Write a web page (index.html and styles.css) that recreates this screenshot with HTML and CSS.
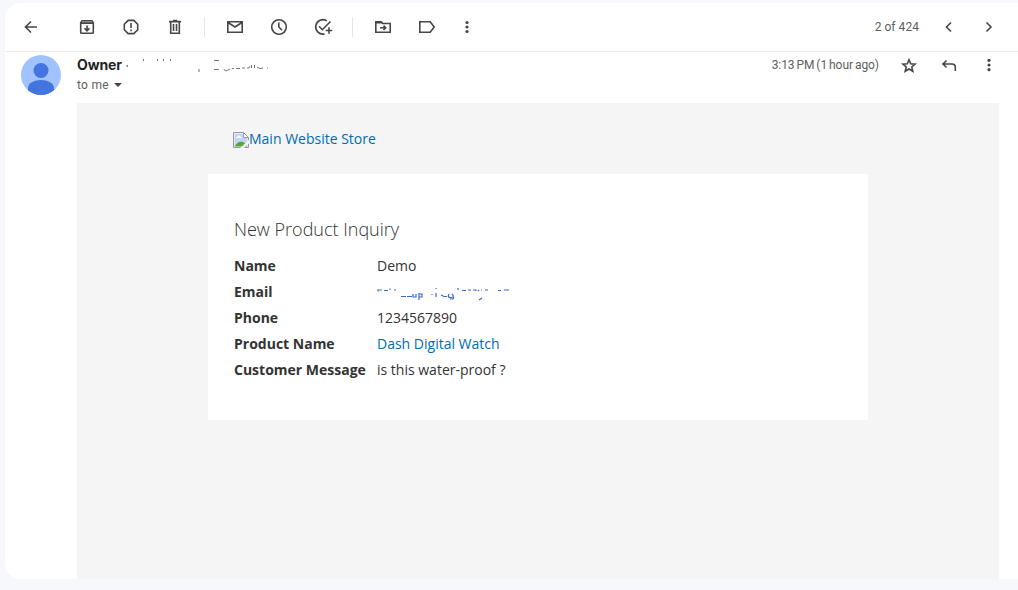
FILE: index.html
```html
<!DOCTYPE html>
<html lang="en">
<head>
<meta charset="utf-8">
<title>New Product Inquiry</title>
<link rel="stylesheet" href="styles.css">
</head>
<body>
<main class="panel">
  <header class="toolbar">
    <svg class="icon back" viewBox="0 0 20 20"><path d="M16 10H5M10 4.500L4.500 10l5.500 5.500"/></svg>
    <svg class="icon" viewBox="0 0 20 20"><path d="M3.700 6v9.600q0 .7.7.7h11.200q.7 0 .7-.7V6M10 8.500v5M7.500 11.200l2.500 2.600 2.500-2.600"/><path class="solid" d="M3 5.500L4.600 3h10.800L17 5.500V7H3z"/><path class="light" d="M5 4.800h10"/></svg>
    <svg class="icon" viewBox="0 0 20 20"><path d="M7.200 3.400h5.600l3.900 3.900v5.400l-3.900 3.900H7.200l-3.900-3.900V7.300zM10 6v5M10 12.500v1.700"/></svg>
    <svg class="icon" viewBox="0 0 20 20"><path d="M5.700 5v11.200h8.600V5M4 4.600h12M8 3.600h4M8.500 7v7M11.500 7v7"/></svg>
    <span class="divider"></span>
    <svg class="icon" viewBox="0 0 20 20"><path d="M2.800 4.700h14.400v10.600H2.800zM3 5.500l7 4.500 7-4.500"/></svg>
    <svg class="icon" viewBox="0 0 20 20"><circle cx="10" cy="10" r="7.300"/><path d="M9.800 5.500V10l3.300 3.300"/></svg>
    <svg class="icon" viewBox="0 0 20 20"><path d="M13.800 3.800A7.200 7.200 0 1 0 11.500 16.900M6 9.300l3.300 3.400L17.500 4.500M16 10.200v6.600M12.700 13.500h6.600"/></svg>
    <span class="divider"></span>
    <svg class="icon" viewBox="0 0 20 20"><path d="M2.800 5h5.500l1.500 1.500h7.400v8.800H2.800zM7 10.800h5.500M10.500 8.600l2.200 2.200-2.200 2.200"/><path class="solid" d="M2 4.800q0-.8.8-.8h5.500l2 2.500H2z"/></svg>
    <svg class="icon" viewBox="0 0 20 20"><path d="M2.800 4.800h10.400l4 5.200-4 5.200H2.800z"/></svg>
    <svg class="icon more" viewBox="0 0 20 20"><g class="solid"><circle cx="10" cy="5.500" r="1.600"/><circle cx="10" cy="10" r="1.600"/><circle cx="10" cy="14.500" r="1.600"/></g></svg>
    <span class="count">2 of 424</span>
    <svg class="icon nav" viewBox="0 0 20 20"><path d="M12 5.500L7.500 10l4.500 4.500"/></svg>
    <svg class="icon nav" viewBox="0 0 20 20"><path d="M7.500 5.500L12 10l-4.500 4.500"/></svg>
  </header>
  <section class="sender">
    <svg class="avatar" viewBox="0 0 40 40"><circle cx="20" cy="20" r="20" fill="#a0c3ff"/><circle cx="20" cy="15.500" r="7.500" fill="#4374e0"/><path fill="#4374e0" d="M7 35.200V33c0-5 6.500-8 13-8s13 3 13 8v2.200A20 20 0 0 1 7 35.200z"/></svg>
    <div class="who">
      <div class="from"><strong>Owner</strong>
        <svg class="smudge" viewBox="0 0 150 20"><path d="M6 10l-1.500 1 1.500 1M21.500 4v2M35.500 4v2M41.500 4v2M48.500 4v2M77 14v3M92 5.500h5M92 14.500h5M102 14.500l2 1.500 4-2M110 13.500h2M114 13.500h4M120 13h3M125 13h2l1-2M129.500 10v3M132.500 10v3M135 12l3 1.500 3-.5M145 13h1"/></svg>
      </div>
      <div class="to">to me <span class="caret"></span></div>
    </div>
    <div class="meta">
      <span class="time">3:13 PM (1 hour ago)</span>
      <svg class="icon" viewBox="0 0 20 20"><path d="M10 4.700l1.700 4 4.400.4-3.300 2.900 1 4.300-3.800-2.300-3.800 2.300 1-4.300-3.300-2.900 4.400-.4z"/></svg>
      <svg class="icon" viewBox="0 0 20 20"><path d="M7.500 5.500L4 9l3.500 3.500M4 9h9q3.300 0 3.300 3.300V16"/></svg>
      <svg class="icon" viewBox="0 0 20 20"><g class="solid"><circle cx="10" cy="5.300" r="1.600"/><circle cx="10" cy="10" r="1.600"/><circle cx="10" cy="14.700" r="1.600"/></g></svg>
    </div>
  </section>
  <article class="mail">
    <a class="store"><svg class="broken" viewBox="0 0 16 16"><path fill="#fff" d="M.5.500h10l5 5v10H.5z"/><path fill="#c3d4f5" d="M1.500 1.500h9v4h4v9h-13z"/><path fill="#fff" d="M3 6q0-1.500 1.500-1.500Q6 2.500 7.300 4.500 9 4.800 8.500 6z"/><path fill="#56ab37" d="M1.500 14.500q3-5 6.500-4.800 4-.2 6.500 4.800z"/><path stroke="#999" fill="none" d="M.5 15.500V.5h10l5 5v10H.5"/><path fill="#fff" stroke="#999" d="M10.500.500v5h5z"/><path stroke="#f5f5f5" stroke-width="2.600" d="M8 17l9-8.500"/></svg>Main Website Store</a>
    <div class="card">
      <h1>New Product Inquiry</h1>
      <dl class="fields">
        <dt>Name</dt><dd>Demo</dd>
        <dt>Email</dt><dd><svg class="trace" viewBox="0 0 140 26"><path d="M1 12.500V11h4M7 11.500h4M13 11V9.500M17 11h2M24 17.500h5M30 17.500h5M36 15v3h3v-3M42 14v7M42 15h3v3h-3M55 15v1M59 9v1M59 14v4M64 16l3 1.500h3M72 15q-2 4 2 3.500t1-3.500M73 20h3l1-2M81 9v2M85 11.500h4M91 11h3M96 11h3v1M101 11l1 1M105 11h-1M102 21l3-2M108 11h3M121 11.500h3M127 11h5"/></svg></dd>
        <dt>Phone</dt><dd>1234567890</dd>
        <dt>Product Name</dt><dd><a>Dash Digital Watch</a></dd>
        <dt>Customer Message</dt><dd>is this water-proof ?</dd>
      </dl>
    </div>
  </article>
</main>
</body>
</html>
```

FILE: styles.css
```css
* { box-sizing: border-box; }
body { margin: 0; height: 590px; padding: 3px 0 0 5px; background: #f6f8fc; font-family: Roboto, sans-serif; overflow: hidden; }
.panel { height: 576px; background: #fff; border-radius: 16px 0 0 16px; overflow: hidden; display: flex; flex-direction: column; }
.icon { width: 20px; height: 20px; flex: none; display: block; fill: none; stroke: #444746; stroke-width: 1.6; }
.solid { fill: #444746; stroke: none; }
.light { stroke: #aaa; stroke-width: 1; }
.toolbar { height: 49px; flex: none; display: flex; align-items: center; gap: 24px; padding: 0 19px 0 16px; border-bottom: 1px solid #e9e9e9; margin-left: 1px; }
.toolbar .back { margin-right: 12px; margin-left: -1px; }
.divider { width: 1px; height: 20px; background: #e4e5e6; margin: 0 -4px 0 -5px; }
.toolbar .more { margin-left: -4px; }
.count { margin-left: auto; margin-right: -4px; font-size: 12px; letter-spacing: .05px; color: #5e5e5e; }
.nav + .nav { margin-left: -4px; }
.sender { height: 51px; flex: none; display: flex; padding: 3px 19px 0 16px; }
.avatar { width: 40px; height: 40px; margin-right: 16px; }
.from { height: 20px; display: flex; font-size: 14px; line-height: 20px; color: #1f1f1f; }
.from strong { width: 45px; font-family: Inter, sans-serif; font-weight: 700; letter-spacing: -.1px; }
.smudge { width: 150px; height: 20px; fill: none; stroke: #777; stroke-width: 1; }
.to { font-size: 12px; line-height: 20px; letter-spacing: .25px; color: #5e5e5e; display: flex; align-items: center; gap: 5px; }
.caret { border: 4px solid transparent; border-top-color: #444746; border-bottom: 0; }
.meta { margin-left: auto; display: flex; height: 20px; align-items: center; gap: 20px; }
.time { font-size: 12px; letter-spacing: -.05px; word-spacing: -1px; color: #5e5e5e; }
.mail { flex: 1; margin: 0 19px 0 72px; background: #f5f5f5; padding: 26px 131px 0; font-family: "Open Sans", sans-serif; font-size: 14px; color: #333; }
.store { display: flex; height: 45px; padding-left: 25px; line-height: 20px; color: #006bb4; }
.broken { width: 16px; height: 16px; margin-top: 3px; }
.card { height: 246px; background: #fff; padding: 42px 26px; }
h1 { margin: 0 0 11px; font-size: 18px; line-height: 26px; font-weight: 300; }
.fields { margin: 0; display: grid; grid-template-columns: 143px 1fr; grid-auto-rows: 26px; line-height: 26px; }
dt { font-weight: 700; }
dd { margin: 0; }
dd a { color: #006bb4; }
.trace { display: block; width: 140px; height: 26px; fill: none; stroke: #3c69d0; stroke-width: 1.200; }
```
